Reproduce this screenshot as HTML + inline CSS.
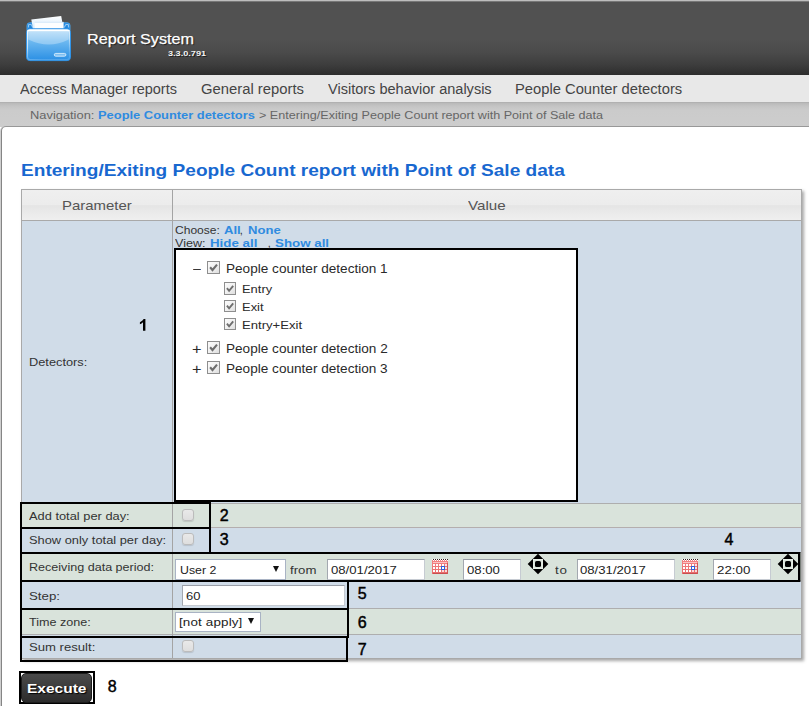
<!DOCTYPE html>
<html>
<head>
<meta charset="utf-8">
<title>Report System</title>
<style>
html,body{margin:0;padding:0;}
html{width:809px;height:706px;overflow:hidden;}
body{width:809px;height:706px;overflow:hidden;background:#fff;font-family:"Liberation Sans",sans-serif;position:relative;}
.a{position:absolute;box-sizing:border-box;}
.t{position:absolute;white-space:pre;font-family:"Liberation Sans",sans-serif;}
.bk{position:absolute;box-sizing:border-box;border:2px solid #000;}
.cb{position:absolute;box-sizing:border-box;width:13px;height:13px;border:1px solid #8e8e8e;background:linear-gradient(135deg,#fbfbfb 0%,#f1f1f1 50%,#dedede 100%);}
.cb svg{position:absolute;left:0;top:0;}
.cbd{position:absolute;box-sizing:border-box;width:12px;height:12px;border:1px solid #bcbcbc;border-radius:3px;background:linear-gradient(#e9e9e9,#dedede);box-shadow:0 1px 1px rgba(0,0,0,.12);}
.inp{position:absolute;box-sizing:border-box;background:#fff;border:1px solid #c6cbd2;border-top-color:#9a9fa8;border-left-color:#a3a8b0;}
.sel{position:absolute;box-sizing:border-box;background:#fff;border:1px solid #a9b3c4;}
.arr{position:absolute;width:0;height:0;border-left:3px solid transparent;border-right:3px solid transparent;border-top:6px solid #111;}
</style>
</head>
<body>
<!-- header -->
<div class="a" style="left:0;top:0;width:809px;height:75px;background:linear-gradient(#515151 0,#515151 40px,#4b4b4b 52px,#3e3e3e 64px,#2d2d2d 75px);"></div>
<div class="a" style="left:0;top:0;width:809px;height:1px;background:#bdbdbd;"></div>
<div class="a" style="left:0;top:1px;width:809px;height:1px;background:#777;"></div>
<!-- menu -->
<div class="a" style="left:0;top:75px;width:809px;height:27px;background:#e8e8e8;"></div>
<!-- breadcrumb -->
<div class="a" style="left:0;top:102px;width:809px;height:25px;background:linear-gradient(#a9a9a9 0,#b9b9b9 1px,#c4c4c4 4px,#cbcbcb 8px,#cdcdcd 100%);"></div>
<!-- content -->
<div class="a" style="left:0;top:126px;width:809px;height:580px;background:#cfcfcf;border-top-left-radius:5px;"></div><div class="a" style="left:1px;top:126px;width:808px;height:580px;background:#fff;border-top:1px solid #989898;border-left:1px solid #858585;border-top-left-radius:5px;"></div>

<!-- logo -->
<svg class="a" style="left:22px;top:12px" width="54" height="54" viewBox="0 0 54 54">
  <defs>
    <linearGradient id="fb" x1="0" y1="0" x2="0" y2="1">
      <stop offset="0" stop-color="#b4dbf8"/><stop offset="0.4" stop-color="#6cb8f0"/><stop offset="1" stop-color="#2a8fe4"/>
    </linearGradient>
    <linearGradient id="ins" x1="0" y1="0" x2="0.35" y2="1"><stop offset="0" stop-color="#f4faff"/><stop offset="0.55" stop-color="#cfe8fb" stop-opacity=".85"/><stop offset="1" stop-color="#8cc6f4" stop-opacity=".35"/></linearGradient>
    <linearGradient id="pp" x1="0" y1="0" x2="0" y2="1">
      <stop offset="0" stop-color="#ffffff"/><stop offset="1" stop-color="#d3e9fb"/>
    </linearGradient>
  </defs>
  <!-- back flap -->
  <path d="M5 13.5 Q5 10.8 7.6 10.8 L45.4 10.8 Q48 10.8 48 13.5 L48 18 L5 18 Z" fill="#1f86de" stroke="#4fa9ee" stroke-width="0.9"/>
  <path d="M6.6 15.5 L6.6 12.6 L9.4 12.6 L10.6 15.5" fill="none" stroke="#d9eeff" stroke-width="0.7"/>
  <path d="M46.4 15.5 L46.4 12.6 L43.6 12.6 L42.4 15.5" fill="none" stroke="#d9eeff" stroke-width="0.7"/>
  <!-- papers -->
  <path d="M9.3 7.4 L39.2 4 L41.2 15.2 L11 17 Z" fill="url(#pp)"/>
  <path d="M12.6 10.2 L41.6 10.2 L41.6 16.8 L12.6 16.8 Z" fill="#fdfeff"/>
  <path d="M12.6 10.3 L41.6 10.3" stroke="#cde4f8" stroke-width=".8"/>
  <!-- front -->
  <rect x="4.5" y="16.8" width="44" height="31.8" rx="3.4" fill="url(#fb)" stroke="#2d92e7" stroke-width="1"/>
  <rect x="5.5" y="17.8" width="42" height="29.8" rx="2.6" fill="none" stroke="url(#ins)" stroke-width="1.1"/>
  <path d="M5.5 18.6 L47.5 18.6" stroke="#ffffff" stroke-width="1.2"/>
  <path d="M6.3 19.2 L46.7 19.2 L46.7 27.5 Q27 37.5 6.3 27.5 Z" fill="#ffffff" opacity=".3"/>
  <!-- handle -->
  <rect x="32.3" y="41.4" width="11.6" height="2.8" rx="1.4" fill="#7fc0f2" stroke="#eaf6ff" stroke-width=".8"/>
</svg>

<!-- table -->
<div class="a" style="left:21px;top:189px;width:781px;height:470px;border:1px solid #a9a9a9;box-shadow:2px 2px 3px rgba(0,0,0,.35);background:#d0dce8;"></div>
<!-- header row -->
<div class="a" style="left:22px;top:190px;width:779px;height:30px;background:linear-gradient(#efefef 0,#ececec 50%,#e5e5e5 52%,#efefef 100%);"></div>
<div class="a" style="left:22px;top:220px;width:779px;height:1px;background:#a9a9a9;"></div>
<!-- rows -->
<div class="a" style="left:22px;top:221px;width:779px;height:282px;background:#d0dce8;"></div>
<div class="a" style="left:22px;top:503px;width:779px;height:1px;background:#aeaeae;"></div>
<div class="a" style="left:22px;top:504px;width:779px;height:23px;background:#d9e3db;"></div>
<div class="a" style="left:22px;top:527px;width:779px;height:1px;background:#b4aeae;"></div>
<div class="a" style="left:22px;top:528px;width:779px;height:24px;background:#d0dce8;"></div>
<div class="a" style="left:22px;top:552px;width:779px;height:1px;background:#aeaeae;"></div>
<div class="a" style="left:22px;top:553px;width:779px;height:27px;background:#d9e3db;"></div>
<div class="a" style="left:22px;top:580px;width:779px;height:1px;background:#aeaeae;"></div>
<div class="a" style="left:22px;top:581px;width:779px;height:27px;background:#d0dce8;"></div>
<div class="a" style="left:22px;top:608px;width:779px;height:1px;background:#aeaeae;"></div>
<div class="a" style="left:22px;top:609px;width:779px;height:25px;background:#d9e3db;"></div>
<div class="a" style="left:22px;top:634px;width:779px;height:1px;background:#aeaeae;"></div>
<div class="a" style="left:22px;top:635px;width:779px;height:23px;background:#d0dce8;"></div>
<!-- column divider -->
<div class="a" style="left:172px;top:190px;width:1px;height:468px;background:#a4a4a4;"></div>

<!-- tree box (annotation 1) -->
<div class="bk" style="left:174px;top:248px;width:404px;height:254px;background:#fff;"></div>
<!-- tree checkboxes -->
<div class="cb" style="left:207px;top:261px;width:13px;height:13px"><svg width="11" height="11" viewBox="0 0 11 11"><path d="M2.1 5.2 L4.5 8 L9 2.6" fill="none" stroke="#6e6e6e" stroke-width="2.1"/></svg></div>
<div class="cb" style="left:224px;top:282px;width:12px;height:13px"><svg width="10" height="11" viewBox="0 0 11 11"><path d="M2.1 5.2 L4.5 8 L9 2.6" fill="none" stroke="#6e6e6e" stroke-width="2.1"/></svg></div>
<div class="cb" style="left:224px;top:300px;width:12px;height:12px"><svg width="10" height="10" viewBox="0 0 11 11"><path d="M2.1 5.2 L4.5 8 L9 2.6" fill="none" stroke="#6e6e6e" stroke-width="2.1"/></svg></div>
<div class="cb" style="left:224px;top:318px;width:12px;height:12px"><svg width="10" height="10" viewBox="0 0 11 11"><path d="M2.1 5.2 L4.5 8 L9 2.6" fill="none" stroke="#6e6e6e" stroke-width="2.1"/></svg></div>
<div class="cb" style="left:207px;top:341px;width:13px;height:13px"><svg width="11" height="11" viewBox="0 0 11 11"><path d="M2.1 5.2 L4.5 8 L9 2.6" fill="none" stroke="#6e6e6e" stroke-width="2.1"/></svg></div>
<div class="cb" style="left:207px;top:361px;width:13px;height:13px"><svg width="11" height="11" viewBox="0 0 11 11"><path d="M2.1 5.2 L4.5 8 L9 2.6" fill="none" stroke="#6e6e6e" stroke-width="2.1"/></svg></div>

<!-- unchecked boxes -->
<div class="cbd" style="left:182px;top:509px"></div>
<div class="cbd" style="left:182px;top:533px"></div>
<div class="cbd" style="left:182px;top:640px"></div>

<!-- receiving row controls -->
<div class="sel" style="left:175px;top:559px;width:111px;height:21px;"></div>
<div class="arr" style="left:273px;top:566px"></div>
<div class="inp" style="left:327px;top:559px;width:98px;height:21px;"></div>
<div class="inp" style="left:463px;top:559px;width:58px;height:21px;"></div>
<div class="inp" style="left:577px;top:559px;width:98px;height:21px;"></div>
<div class="inp" style="left:713px;top:559px;width:58px;height:21px;"></div>
<svg class="a" style="left:432px;top:559px" width="16" height="15" viewBox="0 0 16 15" shape-rendering="crispEdges"><defs><linearGradient id="cg432" x1="0" y1="0" x2="0" y2="1"><stop offset="0" stop-color="#f48686"/><stop offset="1" stop-color="#e86a6a"/></linearGradient></defs><rect x="0" y="0" width="16" height="15" fill="url(#cg432)"/><rect x="1" y="0" width="1" height="1" fill="#3a2020"/><rect x="0" y="0" width="1" height="1" fill="#fff"/><rect x="1" y="1" width="1" height="1" fill="#fff"/><rect x="3" y="0" width="1" height="1" fill="#3a2020"/><rect x="2" y="0" width="1" height="1" fill="#fff"/><rect x="3" y="1" width="1" height="1" fill="#fff"/><rect x="5" y="0" width="1" height="1" fill="#3a2020"/><rect x="4" y="0" width="1" height="1" fill="#fff"/><rect x="5" y="1" width="1" height="1" fill="#fff"/><rect x="7" y="0" width="1" height="1" fill="#3a2020"/><rect x="6" y="0" width="1" height="1" fill="#fff"/><rect x="7" y="1" width="1" height="1" fill="#fff"/><rect x="9" y="0" width="1" height="1" fill="#3a2020"/><rect x="8" y="0" width="1" height="1" fill="#fff"/><rect x="9" y="1" width="1" height="1" fill="#fff"/><rect x="11" y="0" width="1" height="1" fill="#3a2020"/><rect x="10" y="0" width="1" height="1" fill="#fff"/><rect x="11" y="1" width="1" height="1" fill="#fff"/><rect x="13" y="0" width="1" height="1" fill="#3a2020"/><rect x="12" y="0" width="1" height="1" fill="#fff"/><rect x="13" y="1" width="1" height="1" fill="#fff"/><rect x="15" y="0" width="1" height="1" fill="#3a2020"/><rect x="14" y="0" width="1" height="1" fill="#fff"/><rect x="15" y="1" width="1" height="1" fill="#fff"/><rect x="1" y="3" width="14" height="1" fill="#f9c4c4"/><rect x="1" y="5" width="2" height="2" fill="#fff"/><rect x="4" y="5" width="2" height="2" fill="#fff"/><rect x="7" y="5" width="2" height="2" fill="#fff"/><rect x="10" y="5" width="2" height="2" fill="#fff"/><rect x="13" y="5" width="2" height="2" fill="#fbe3e3"/><rect x="1" y="8" width="2" height="2" fill="#fff"/><rect x="4" y="8" width="2" height="2" fill="#fff"/><rect x="7" y="8" width="2" height="2" fill="#fff"/><rect x="10" y="8" width="2" height="2" fill="#fff"/><rect x="13" y="8" width="2" height="2" fill="#fbe3e3"/><rect x="1" y="11" width="2" height="2" fill="#fff"/><rect x="4" y="11" width="2" height="2" fill="#fff"/><rect x="7" y="11" width="2" height="2" fill="#fff"/><rect x="10" y="11" width="2" height="2" fill="#f9d9d9"/><rect x="13" y="11" width="2" height="2" fill="#f9d9d9"/><rect x="9" y="7" width="4" height="4" fill="#2c62dc"/><rect x="10" y="8" width="2" height="2" fill="#fff"/><rect x="1" y="14" width="15" height="1" fill="#c94f4f"/><rect x="15" y="4" width="1" height="11" fill="#cf5555"/></svg>
<svg class="a" style="left:682px;top:559px" width="16" height="15" viewBox="0 0 16 15" shape-rendering="crispEdges"><defs><linearGradient id="cg682" x1="0" y1="0" x2="0" y2="1"><stop offset="0" stop-color="#f48686"/><stop offset="1" stop-color="#e86a6a"/></linearGradient></defs><rect x="0" y="0" width="16" height="15" fill="url(#cg682)"/><rect x="1" y="0" width="1" height="1" fill="#3a2020"/><rect x="0" y="0" width="1" height="1" fill="#fff"/><rect x="1" y="1" width="1" height="1" fill="#fff"/><rect x="3" y="0" width="1" height="1" fill="#3a2020"/><rect x="2" y="0" width="1" height="1" fill="#fff"/><rect x="3" y="1" width="1" height="1" fill="#fff"/><rect x="5" y="0" width="1" height="1" fill="#3a2020"/><rect x="4" y="0" width="1" height="1" fill="#fff"/><rect x="5" y="1" width="1" height="1" fill="#fff"/><rect x="7" y="0" width="1" height="1" fill="#3a2020"/><rect x="6" y="0" width="1" height="1" fill="#fff"/><rect x="7" y="1" width="1" height="1" fill="#fff"/><rect x="9" y="0" width="1" height="1" fill="#3a2020"/><rect x="8" y="0" width="1" height="1" fill="#fff"/><rect x="9" y="1" width="1" height="1" fill="#fff"/><rect x="11" y="0" width="1" height="1" fill="#3a2020"/><rect x="10" y="0" width="1" height="1" fill="#fff"/><rect x="11" y="1" width="1" height="1" fill="#fff"/><rect x="13" y="0" width="1" height="1" fill="#3a2020"/><rect x="12" y="0" width="1" height="1" fill="#fff"/><rect x="13" y="1" width="1" height="1" fill="#fff"/><rect x="15" y="0" width="1" height="1" fill="#3a2020"/><rect x="14" y="0" width="1" height="1" fill="#fff"/><rect x="15" y="1" width="1" height="1" fill="#fff"/><rect x="1" y="3" width="14" height="1" fill="#f9c4c4"/><rect x="1" y="5" width="2" height="2" fill="#fff"/><rect x="4" y="5" width="2" height="2" fill="#fff"/><rect x="7" y="5" width="2" height="2" fill="#fff"/><rect x="10" y="5" width="2" height="2" fill="#fff"/><rect x="13" y="5" width="2" height="2" fill="#fbe3e3"/><rect x="1" y="8" width="2" height="2" fill="#fff"/><rect x="4" y="8" width="2" height="2" fill="#fff"/><rect x="7" y="8" width="2" height="2" fill="#fff"/><rect x="10" y="8" width="2" height="2" fill="#fff"/><rect x="13" y="8" width="2" height="2" fill="#fbe3e3"/><rect x="1" y="11" width="2" height="2" fill="#fff"/><rect x="4" y="11" width="2" height="2" fill="#fff"/><rect x="7" y="11" width="2" height="2" fill="#fff"/><rect x="10" y="11" width="2" height="2" fill="#f9d9d9"/><rect x="13" y="11" width="2" height="2" fill="#f9d9d9"/><rect x="9" y="7" width="4" height="4" fill="#2c62dc"/><rect x="10" y="8" width="2" height="2" fill="#fff"/><rect x="1" y="14" width="15" height="1" fill="#c94f4f"/><rect x="15" y="4" width="1" height="11" fill="#cf5555"/></svg>
<svg class="a" style="left:527px;top:553px" width="22" height="22" viewBox="-11 -11 22 22"><path d="M0 -10.3 L10.3 0 L0 10.3 L-10.3 0 Z" fill="#000"/><rect x="-5" y="-5" width="10" height="10" fill="#e6eee6"/><rect x="-4" y="-4" width="8" height="8" fill="#dbe5dc"/><rect x="-3" y="-3" width="6" height="6" rx="1.6" fill="#000"/></svg>
<svg class="a" style="left:777px;top:553px" width="22" height="22" viewBox="-11 -11 22 22"><path d="M0 -10.3 L10.3 0 L0 10.3 L-10.3 0 Z" fill="#000"/><rect x="-5" y="-5" width="10" height="10" fill="#e6eee6"/><rect x="-4" y="-4" width="8" height="8" fill="#dbe5dc"/><rect x="-3" y="-3" width="6" height="6" rx="1.6" fill="#000"/></svg>

<!-- step / tz -->
<div class="inp" style="left:182px;top:585px;width:163px;height:21px;"></div>
<div class="sel" style="left:175px;top:612px;width:86px;height:20px;"></div>
<div class="arr" style="left:248px;top:618px"></div>

<!-- annotation boxes 2..7 -->
<div class="bk" style="left:20px;top:502px;width:191px;height:27px;"></div>
<div class="bk" style="left:20px;top:527px;width:191px;height:27px;"></div>
<div class="bk" style="left:20px;top:552px;width:780px;height:30px;"></div><div class="a" style="left:800px;top:552px;width:1px;height:30px;background:rgba(0,0,0,.45)"></div>
<div class="bk" style="left:20px;top:580px;width:329px;height:30px;"></div>
<div class="bk" style="left:20px;top:608px;width:329px;height:30px;"></div>
<div class="bk" style="left:20px;top:636px;width:328px;height:26px;"></div>

<!-- execute -->
<div class="a" style="left:19px;top:671px;width:76px;height:33px;border:2px solid #000;background:#fff;"></div>
<div class="a" style="left:21px;top:673px;width:71px;height:30px;border-radius:5px;background:linear-gradient(#4a4a4a 0,#3b3b3b 50%,#2c2c2c 100%);border:1px solid #1c1c1c;"></div>

<!-- digit 1 -->
<svg class="a" style="left:136px;top:316px" width="14" height="18" viewBox="136 316 14 18"><path d="M145.4 319 L145.4 330.8 L143 330.8 L143 322.3 Q141.7 323.6 139.9 324.2 L139.9 322.2 Q142.6 321.1 143.7 319 Z" fill="#000"/></svg>
<span class="t" style="left:87.30px;top:30.30px;font-size:15px;line-height:17px;font-weight:400;letter-spacing:0.000px;transform:scaleX(1.0777);transform-origin:0 0;color:#fff;text-shadow:1px 1px 1px #1a1a1a;-webkit-text-stroke:0.25px #fff;">Report System</span>
<span class="t" style="left:168.31px;top:48.73px;font-size:8px;line-height:9px;font-weight:700;letter-spacing:0.000px;transform:scaleX(1.1426);transform-origin:0 0;color:#f4f4f4;text-shadow:1px 1px 0 #222;">3.3.0.791</span>
<span class="t" style="left:19.57px;top:81.15px;font-size:14px;line-height:16px;font-weight:400;letter-spacing:0.000px;transform:scaleX(1.0344);transform-origin:0 0;color:#444;">Access Manager reports</span>
<span class="t" style="left:201.12px;top:81.15px;font-size:14px;line-height:16px;font-weight:400;letter-spacing:0.000px;transform:scaleX(1.0582);transform-origin:0 0;color:#444;">General reports</span>
<span class="t" style="left:328.17px;top:81.15px;font-size:14px;line-height:16px;font-weight:400;letter-spacing:0.000px;transform:scaleX(1.0376);transform-origin:0 0;color:#444;">Visitors behavior analysis</span>
<span class="t" style="left:514.99px;top:81.15px;font-size:14px;line-height:16px;font-weight:400;letter-spacing:0.000px;transform:scaleX(1.0530);transform-origin:0 0;color:#444;">People Counter detectors</span>
<span class="t" style="left:29.63px;top:108.69px;font-size:11px;line-height:13px;font-weight:400;letter-spacing:0.000px;transform:scaleX(1.1695);transform-origin:0 0;color:#666;">Navigation:</span>
<span class="t" style="left:98.14px;top:108.69px;font-size:11px;line-height:13px;font-weight:700;letter-spacing:0.000px;transform:scaleX(1.1717);transform-origin:0 0;color:#2f8be0;">People Counter detectors</span>
<span class="t" style="left:258.77px;top:108.69px;font-size:11px;line-height:13px;font-weight:400;letter-spacing:0.000px;transform:scaleX(1.1450);transform-origin:0 0;color:#666;">&gt; Entering/Exiting People Count report with Point of Sale data</span>
<span class="t" style="left:21.20px;top:160.78px;font-size:16.5px;line-height:19px;font-weight:700;letter-spacing:0.000px;transform:scaleX(1.1563);transform-origin:0 0;color:#1868d0;">Entering/Exiting People Count report with Point of Sale data</span>
<span class="t" style="left:61.64px;top:198.00px;font-size:13px;line-height:15px;font-weight:400;letter-spacing:0.000px;transform:scaleX(1.1475);transform-origin:0 0;color:#555;">Parameter</span>
<span class="t" style="left:468.49px;top:198.00px;font-size:13px;line-height:15px;font-weight:400;letter-spacing:0.000px;transform:scaleX(1.1646);transform-origin:0 0;color:#555;">Value</span>
<span class="t" style="left:28.53px;top:355.69px;font-size:11px;line-height:13px;font-weight:400;letter-spacing:-0.000px;transform:scaleX(1.1622);transform-origin:0 0;color:#333;">Detectors:</span>
<span class="t" style="left:175.01px;top:223.69px;font-size:11px;line-height:13px;font-weight:400;letter-spacing:0.000px;transform:scaleX(1.0946);transform-origin:0 0;color:#333;">Choose:</span>
<span class="t" style="left:224.11px;top:223.69px;font-size:11px;line-height:13px;font-weight:700;letter-spacing:0.000px;transform:scaleX(1.1873);transform-origin:0 0;color:#2f8be0;">All</span>
<span class="t" style="left:239.87px;top:223.69px;font-size:11px;line-height:13px;font-weight:400;letter-spacing:0.000px;color:#333;">,</span>
<span class="t" style="left:247.63px;top:223.69px;font-size:11px;line-height:13px;font-weight:700;letter-spacing:0.000px;transform:scaleX(1.1897);transform-origin:0 0;color:#2f8be0;">None</span>
<span class="t" style="left:175.30px;top:236.69px;font-size:11px;line-height:13px;font-weight:400;letter-spacing:0.000px;transform:scaleX(1.1462);transform-origin:0 0;color:#333;">View:</span>
<span class="t" style="left:209.81px;top:236.69px;font-size:11px;line-height:13px;font-weight:700;letter-spacing:0.000px;transform:scaleX(1.2111);transform-origin:0 0;color:#2f8be0;">Hide all</span>
<span class="t" style="left:267.87px;top:236.69px;font-size:11px;line-height:13px;font-weight:400;letter-spacing:0.000px;color:#333;">,</span>
<span class="t" style="left:275.26px;top:236.69px;font-size:11px;line-height:13px;font-weight:700;letter-spacing:0.000px;transform:scaleX(1.2109);transform-origin:0 0;color:#2f8be0;">Show all</span>
<span class="t" style="left:192.70px;top:261.67px;font-size:12.5px;line-height:14px;font-weight:400;letter-spacing:0.000px;transform:scaleX(1.1340);transform-origin:0 0;color:#2a2a2a;">–</span>
<span class="t" style="left:225.54px;top:261.67px;font-size:12.5px;line-height:14px;font-weight:400;letter-spacing:0.000px;transform:scaleX(1.0871);transform-origin:0 0;color:#2a2a2a;">People counter detection 1</span>
<span class="t" style="left:241.63px;top:282.58px;font-size:11.3px;line-height:13px;font-weight:400;letter-spacing:-0.000px;transform:scaleX(1.1437);transform-origin:0 0;color:#2a2a2a;">Entry</span>
<span class="t" style="left:241.62px;top:300.58px;font-size:11.3px;line-height:13px;font-weight:400;letter-spacing:0.000px;transform:scaleX(1.1463);transform-origin:0 0;color:#2a2a2a;">Exit</span>
<span class="t" style="left:241.61px;top:318.58px;font-size:11.3px;line-height:13px;font-weight:400;letter-spacing:0.000px;transform:scaleX(1.1615);transform-origin:0 0;color:#2a2a2a;">Entry+Exit</span>
<span class="t" style="left:192.19px;top:341.21px;font-size:14px;line-height:16px;font-weight:400;letter-spacing:0.000px;transform:scaleX(1.1624);transform-origin:0 0;color:#2a2a2a;">+</span>
<span class="t" style="left:225.54px;top:341.67px;font-size:12.5px;line-height:14px;font-weight:400;letter-spacing:0.000px;transform:scaleX(1.0873);transform-origin:0 0;color:#2a2a2a;">People counter detection 2</span>
<span class="t" style="left:192.19px;top:361.21px;font-size:14px;line-height:16px;font-weight:400;letter-spacing:0.000px;transform:scaleX(1.1624);transform-origin:0 0;color:#2a2a2a;">+</span>
<span class="t" style="left:225.54px;top:361.67px;font-size:12.5px;line-height:14px;font-weight:400;letter-spacing:0.000px;transform:scaleX(1.0871);transform-origin:0 0;color:#2a2a2a;">People counter detection 3</span>
<span class="t" style="left:29.12px;top:509.69px;font-size:11px;line-height:13px;font-weight:400;letter-spacing:0.000px;transform:scaleX(1.1673);transform-origin:0 0;color:#333;">Add total per day:</span>
<span class="t" style="left:28.64px;top:533.69px;font-size:11px;line-height:13px;font-weight:400;letter-spacing:0.000px;transform:scaleX(1.1681);transform-origin:0 0;color:#333;">Show only total per day:</span>
<span class="t" style="left:28.55px;top:560.69px;font-size:11px;line-height:13px;font-weight:400;letter-spacing:0.000px;transform:scaleX(1.1423);transform-origin:0 0;color:#333;">Receiving data period:</span>
<span class="t" style="left:28.61px;top:589.69px;font-size:11px;line-height:13px;font-weight:400;letter-spacing:0.000px;transform:scaleX(1.2081);transform-origin:0 0;color:#333;">Step:</span>
<span class="t" style="left:28.93px;top:615.69px;font-size:11px;line-height:13px;font-weight:400;letter-spacing:0.000px;transform:scaleX(1.1443);transform-origin:0 0;color:#333;">Time zone:</span>
<span class="t" style="left:28.62px;top:640.69px;font-size:11px;line-height:13px;font-weight:400;letter-spacing:0.000px;transform:scaleX(1.1920);transform-origin:0 0;color:#333;">Sum result:</span>
<span class="t" style="left:180.00px;top:563.69px;font-size:11px;line-height:13px;font-weight:400;letter-spacing:0.000px;transform:scaleX(1.1212);transform-origin:0 0;color:#222;">User 2</span>
<span class="t" style="left:289.82px;top:563.69px;font-size:11px;line-height:13px;font-weight:400;letter-spacing:0.000px;transform:scaleX(1.1999);transform-origin:0 0;color:#333;">from</span>
<span class="t" style="left:330.76px;top:563.69px;font-size:11px;line-height:13px;font-weight:400;letter-spacing:0.000px;transform:scaleX(1.1946);transform-origin:0 0;color:#222;">08/01/2017</span>
<span class="t" style="left:466.86px;top:563.69px;font-size:11px;line-height:13px;font-weight:400;letter-spacing:0.000px;transform:scaleX(1.1968);transform-origin:0 0;color:#222;">08:00</span>
<span class="t" style="left:554.91px;top:563.69px;font-size:11px;line-height:13px;font-weight:400;letter-spacing:0.637px;transform:scaleX(1.2200);transform-origin:0 0;color:#333;">to</span>
<span class="t" style="left:580.26px;top:563.69px;font-size:11px;line-height:13px;font-weight:400;letter-spacing:0.000px;transform:scaleX(1.1946);transform-origin:0 0;color:#222;">08/31/2017</span>
<span class="t" style="left:716.87px;top:563.69px;font-size:11px;line-height:13px;font-weight:400;letter-spacing:0.000px;transform:scaleX(1.2109);transform-origin:0 0;color:#222;">22:00</span>
<span class="t" style="left:186.06px;top:589.69px;font-size:11px;line-height:13px;font-weight:400;letter-spacing:0.000px;transform:scaleX(1.1801);transform-origin:0 0;color:#222;">60</span>
<span class="t" style="left:179.06px;top:615.69px;font-size:11px;line-height:13px;font-weight:400;letter-spacing:0.117px;transform:scaleX(1.2200);transform-origin:0 0;color:#222;">[not apply]</span>
<span class="t" style="left:26.61px;top:681.00px;font-size:13px;line-height:15px;font-weight:700;letter-spacing:0.000px;transform:scaleX(1.1929);transform-origin:0 0;color:#fff;text-shadow:1px 1px 1px #000;">Execute</span>
<span class="t" style="left:219.69px;top:507.11px;font-size:16px;line-height:18px;font-weight:400;letter-spacing:0.000px;color:#000;-webkit-text-stroke:0.45px #000;">2</span>
<span class="t" style="left:219.77px;top:531.11px;font-size:16px;line-height:18px;font-weight:400;letter-spacing:0.000px;color:#000;-webkit-text-stroke:0.45px #000;">3</span>
<span class="t" style="left:724.54px;top:531.10px;font-size:16px;line-height:18px;font-weight:400;letter-spacing:0.000px;color:#000;-webkit-text-stroke:0.45px #000;">4</span>
<span class="t" style="left:357.86px;top:584.66px;font-size:16px;line-height:18px;font-weight:400;letter-spacing:0.000px;color:#000;-webkit-text-stroke:0.45px #000;">5</span>
<span class="t" style="left:357.66px;top:613.56px;font-size:16px;line-height:18px;font-weight:400;letter-spacing:0.000px;color:#000;-webkit-text-stroke:0.45px #000;">6</span>
<span class="t" style="left:357.68px;top:641.11px;font-size:16px;line-height:18px;font-weight:400;letter-spacing:0.000px;color:#000;-webkit-text-stroke:0.45px #000;">7</span>
<span class="t" style="left:107.69px;top:677.79px;font-size:16px;line-height:18px;font-weight:400;letter-spacing:0.000px;color:#000;-webkit-text-stroke:0.45px #000;">8</span>
</body>
</html>
